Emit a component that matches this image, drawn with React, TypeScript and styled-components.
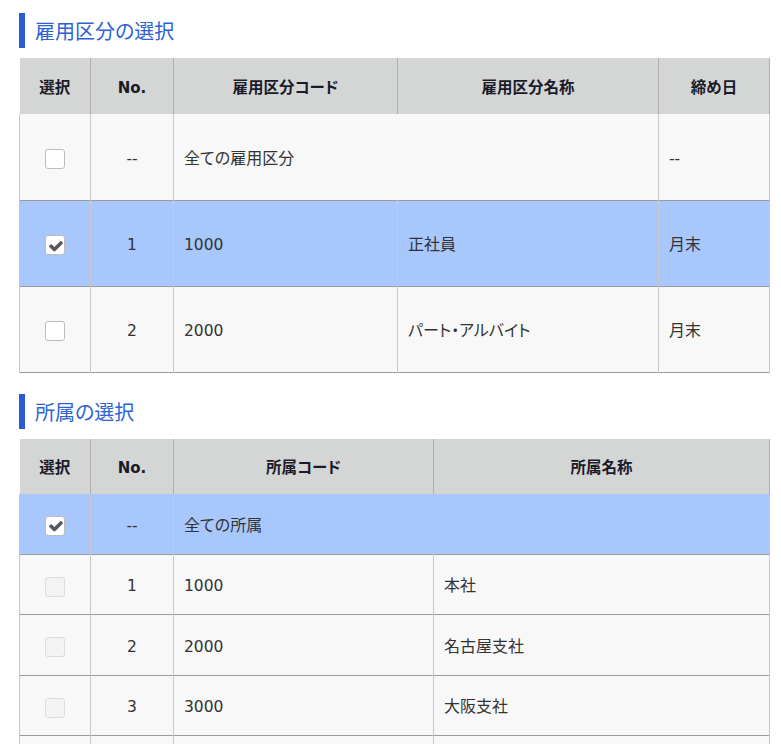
import React from "react";
import styled, { createGlobalStyle } from "styled-components";

const Global = createGlobalStyle`
  html, body { margin: 0; padding: 0; background: #ffffff; }
  body { font-family: "Noto Sans CJK JP", sans-serif; }
`;

const Page = styled.div`
  padding: 13px 12px 0 19px;
  display: flex;
  flex-direction: column;
`;

const Section = styled.section`
  display: flex;
  flex-direction: column;
  margin-bottom: 21px;
`;

const Title = styled.h2`
  margin: 0 0 10px 0;
  height: 35px;
  line-height: 35px;
  border-left: 6px solid #2a5bd4;
  padding-left: 10px;
  font-family: "Noto Sans CJK JP", sans-serif;
  font-feature-settings: "palt";
  font-size: 20px;
  font-weight: 400;
  color: #2e62d6;
`;

const Table = styled.table`
  width: 750px;
  table-layout: fixed;
  border-collapse: collapse;
  font-family: "Noto Sans CJK JP", sans-serif;
  font-feature-settings: "palt";
  font-size: 16px;
  color: #333333;
`;

const Latin = styled.span`
  font-family: "DejaVu Sans", sans-serif;
  font-size: 15.5px;
`;

const HeadLatin = styled.span`
  font-family: "DejaVu Sans", sans-serif;
  font-size: 15px;
`;

const HeadRow = styled.tr<{ $h: number }>`
  height: ${(p) => p.$h}px;
`;

const HeadCell = styled.th<{ $last?: boolean }>`
  padding: 0;
  background: #d4d6d6;
  color: #1a1a28;
  font-weight: 700;
  font-size: 15.5px;
  text-align: center;
  vertical-align: middle;
  border-left: 1px solid #b0b0b0;
  border-right: ${(p) => (p.$last ? "1px solid #b0b0b0" : "none")};
  &:first-child { border-left: none; }
`;

const Row = styled.tr<{ $selected?: boolean; $h: number }>`
  height: ${(p) => p.$h}px;
  background: ${(p) => (p.$selected ? "#a8c7fd" : "#f8f8f8")};
  border-bottom: 1px solid #9a9a9a;
`;

const Cell = styled.td<{ $center?: boolean }>`
  padding: 0 10px;
  vertical-align: middle;
  text-align: ${(p) => (p.$center ? "center" : "left")};
  border-left: 1px solid #c9c9c9;
  border-right: 1px solid #c9c9c9;
  white-space: nowrap;
`;

const Box = styled.span<{ $disabled?: boolean }>`
  display: inline-flex;
  align-items: center;
  justify-content: center;
  width: 18px;
  height: 18px;
  border-radius: 3px;
  border: 1px solid ${(p) => (p.$disabled ? "#dcdcdc" : "#bdbdbd")};
  background: ${(p) => (p.$disabled ? "#f3f3f3" : "#ffffff")};
  vertical-align: middle;
`;

const CheckMark = styled.svg`
  width: 16px;
  height: 16px;
  margin-top: 1px;
  margin-left: 1px;
`;

const Check = ({ checked, disabled }: { checked?: boolean; disabled?: boolean }) => (
  <Box $disabled={disabled}>
    {checked && (
      <CheckMark viewBox="0 0 1792 1792">
        <path
          d="M1671 566q0 40-28 68l-724 724-136 136q-28 28-68 28t-68-28l-136-136-362-362q-28-28-28-68t28-68l136-136q28-28 68-28t68 28l294 295 656-657q28-28 68-28t68 28l136 136q28 28 28 68z"
          fill="#585858"
        />
      </CheckMark>
    )}
  </Box>
);

type R1 = { sel?: boolean; no: string; code: string; name?: string; close: string; all?: boolean };

const rows1: R1[] = [
  { no: "--", code: "全ての雇用区分", close: "--", all: true },
  { sel: true, no: "1", code: "1000", name: "正社員", close: "月末" },
  { no: "2", code: "2000", name: "パート・アルバイト", close: "月末" },
];

type R2 = { sel?: boolean; no: string; code: string; name?: string; all?: boolean };

const rows2: R2[] = [
  { sel: true, no: "--", code: "全ての所属", all: true },
  { no: "1", code: "1000", name: "本社" },
  { no: "2", code: "2000", name: "名古屋支社" },
  { no: "3", code: "3000", name: "大阪支社" },
  { no: "4", code: "4000", name: "福岡支社" },
];

const isLatin = (s: string) => /^[\x20-\x7e]+$/.test(s);
const Txt = ({ s }: { s: string }) => (isLatin(s) ? <Latin>{s}</Latin> : <>{s}</>);

export default function App() {
  return (
    <>
      <Global />
      <Page>
        <Section>
          <Title>雇用区分の選択</Title>
          <Table>
            <colgroup>
              <col style={{ width: 71 }} />
              <col style={{ width: 83 }} />
              <col style={{ width: 224 }} />
              <col style={{ width: 261 }} />
              <col style={{ width: 111 }} />
            </colgroup>
            <thead>
              <HeadRow $h={56}>
                <HeadCell>選択</HeadCell>
                <HeadCell>
                  <HeadLatin>No.</HeadLatin>
                </HeadCell>
                <HeadCell>雇用区分コード</HeadCell>
                <HeadCell>雇用区分名称</HeadCell>
                <HeadCell $last>締め日</HeadCell>
              </HeadRow>
            </thead>
            <tbody>
              {rows1.map((r, i) => (
                <Row key={i} $selected={r.sel} $h={86}>
                  <Cell $center>
                    <Check checked={r.sel} />
                  </Cell>
                  <Cell $center>
                    <Txt s={r.no} />
                  </Cell>
                  {r.all ? (
                    <Cell colSpan={2}>
                      <Txt s={r.code} />
                    </Cell>
                  ) : (
                    <>
                      <Cell>
                        <Txt s={r.code} />
                      </Cell>
                      <Cell>{r.name}</Cell>
                    </>
                  )}
                  <Cell>
                    <Txt s={r.close} />
                  </Cell>
                </Row>
              ))}
            </tbody>
          </Table>
        </Section>
        <Section>
          <Title>所属の選択</Title>
          <Table>
            <colgroup>
              <col style={{ width: 71 }} />
              <col style={{ width: 83 }} />
              <col style={{ width: 260 }} />
              <col style={{ width: 336 }} />
            </colgroup>
            <thead>
              <HeadRow $h={55}>
                <HeadCell>選択</HeadCell>
                <HeadCell>
                  <HeadLatin>No.</HeadLatin>
                </HeadCell>
                <HeadCell>所属コード</HeadCell>
                <HeadCell $last>所属名称</HeadCell>
              </HeadRow>
            </thead>
            <tbody>
              {rows2.map((r, i) => (
                <Row key={i} $selected={r.sel} $h={60.5}>
                  <Cell $center>
                    <Check checked={r.sel} disabled={!r.sel} />
                  </Cell>
                  <Cell $center>
                    <Txt s={r.no} />
                  </Cell>
                  {r.all ? (
                    <Cell colSpan={2}>
                      <Txt s={r.code} />
                    </Cell>
                  ) : (
                    <>
                      <Cell>
                        <Txt s={r.code} />
                      </Cell>
                      <Cell>{r.name}</Cell>
                    </>
                  )}
                </Row>
              ))}
            </tbody>
          </Table>
        </Section>
      </Page>
    </>
  );
}
